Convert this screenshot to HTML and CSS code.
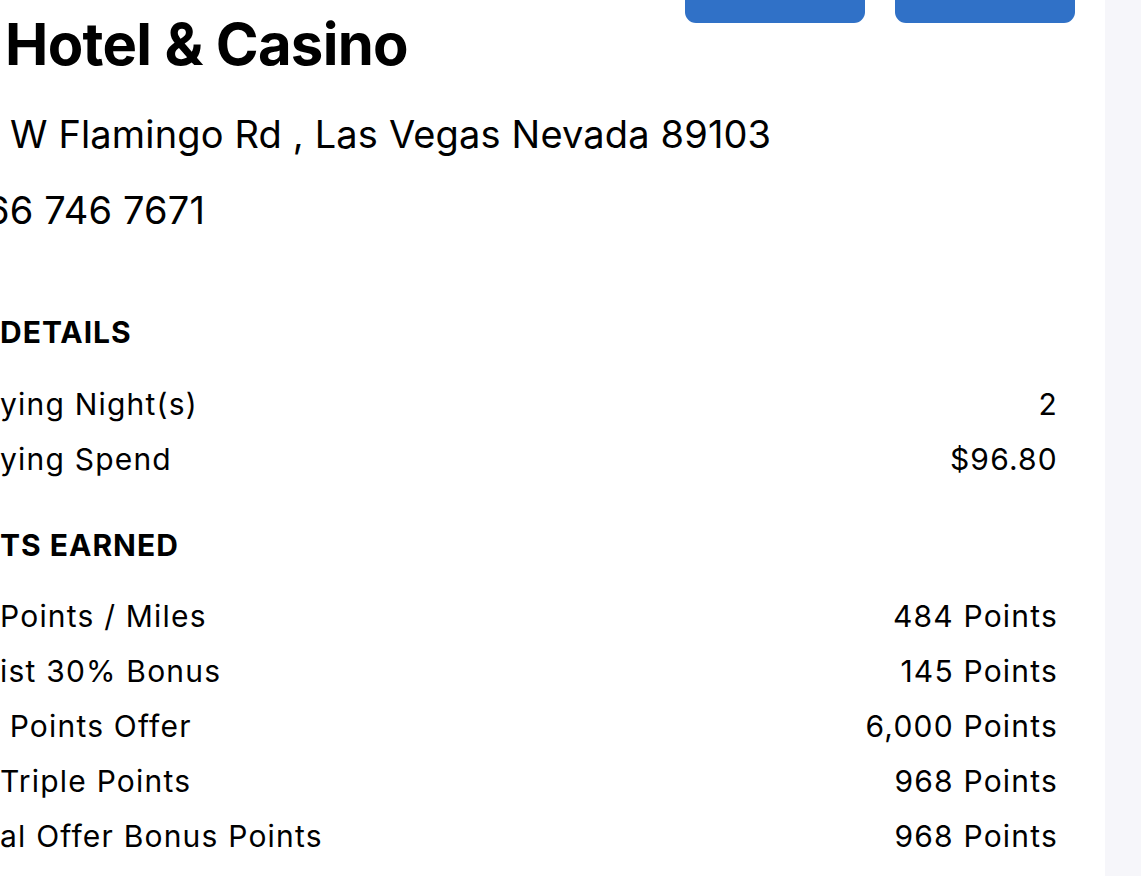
FILE: index.html
```html
<!DOCTYPE html>
<html lang="en">
<head>
<meta charset="utf-8">
<title>Hotel &amp; Casino</title>
<link rel="stylesheet" href="styles.css">
</head>
<body>
<div class="layout">
  <main class="content">
    <header class="top">
      <h1 class="title">Hotel &amp; Casino</h1>
      <div class="actions">
        <button class="btn" type="button"></button>
        <button class="btn" type="button"></button>
      </div>
    </header>
    <p class="address">W Flamingo Rd , Las Vegas Nevada 89103</p>
    <p class="phone">66 746 7671</p>

    <section class="group group-stay">
      <h2 class="group-title">DETAILS</h2>
      <div class="row"><span class="label">ying Night(s)</span><span class="value">2</span></div>
      <div class="row"><span class="label">ying Spend</span><span class="value">$96.80</span></div>
    </section>

    <section class="group group-points">
      <h2 class="group-title">TS EARNED</h2>
      <div class="row"><span class="label">Points / Miles</span><span class="value">484 Points</span></div>
      <div class="row"><span class="label">ist 30% Bonus</span><span class="value">145 Points</span></div>
      <div class="row"><span class="label">&nbsp;Points Offer</span><span class="value">6,000 Points</span></div>
      <div class="row"><span class="label">Triple Points</span><span class="value">968 Points</span></div>
      <div class="row"><span class="label">al Offer Bonus Points</span><span class="value">968 Points</span></div>
    </section>
  </main>
  <aside class="side"></aside>
</div>
</body>
</html>
```

FILE: styles.css
```css
html, body {
  margin: 0;
  padding: 0;
  background: #ffffff;
  height: 100%;
  overflow: hidden;
}

body {
  font-family: "Inter", "Liberation Sans", sans-serif;
  color: #000000;
}

.layout {
  display: flex;
  height: 876px;
}

.content {
  flex: 1;
  padding-right: 47px;
  overflow: hidden;
}

.side {
  width: 36px;
  background: #f6f6fa;
}

.top {
  display: flex;
  justify-content: space-between;
  align-items: flex-start;
}

.title {
  margin: 0;
  padding-top: 10px;
  padding-left: 5px;
  font-size: 58px;
  line-height: 1.2;
  font-weight: 700;
  letter-spacing: -0.7px;
}

.actions {
  display: flex;
  gap: 30px;
  margin-right: -17px;
}

.btn {
  width: 180px;
  height: 23px;
  border: 0;
  padding: 0;
  background: #3071c7;
  border-radius: 0 0 11px 11px;
}

.address,
.phone {
  margin: 0;
  font-size: 38px;
  line-height: 1.2;
  letter-spacing: 0.15px;
}

.address {
  margin-top: 32px;
  padding-left: 10px;
}

.phone {
  margin-top: 31px;
  margin-left: -14px;
}

.group-title {
  margin: 0;
  font-size: 30px;
  line-height: 1.16;
  font-weight: 700;
  letter-spacing: 1px;
}

.group-stay {
  margin-top: 81px;
}

.group-points {
  margin-top: 41px;
}

.group-title + .row {
  margin-top: 27px;
}

.row {
  display: flex;
  justify-content: space-between;
  font-size: 30px;
  line-height: 55px;
  letter-spacing: 1.2px;
}
```
